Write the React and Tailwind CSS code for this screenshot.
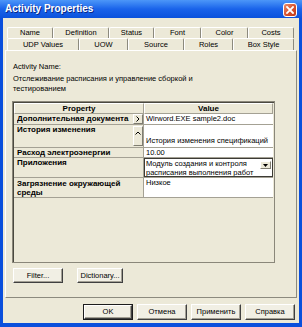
import React from "react";

const row1 = [
  ["Name", "w-[46px]"],
  ["Definition", "w-[56px]"],
  ["Status", "w-[45px]"],
  ["Font", "w-[47px]"],
  ["Color", "w-[47px]"],
  ["Costs", "w-[46px]"],
];
const row2 = [
  ["UDP Values", "w-[72px]"],
  ["UOW", "w-[49px]"],
  ["Source", "w-[56px]"],
  ["Roles", "w-[49px]"],
  ["Box Style", "w-[61px]"],
];

function Tab({ label, w, h }) {
  return (
    <div
      className={
        "flex items-center justify-center text-[7.5px] leading-none border-t border-l border-r border-t-white border-l-white border-r-[#8c8a7e] rounded-t-[2px] " +
        w +
        " " +
        h
      }
    >
      {label}
    </div>
  );
}

function Button({ label, className }) {
  return (
    <div
      className={
        "flex items-center justify-center bg-[#f1efe4] border border-t-white border-l-white border-r-[#404040] border-b-[#404040] shadow-[inset_-1px_-1px_0_#a3a094] text-[7.5px] leading-none " +
        className
      }
    >
      {label}
    </div>
  );
}

function SmallBtn({ className, children }) {
  return (
    <div
      className={
        "flex justify-center bg-[#ece9d8] border border-t-white border-l-white border-r-[#7f7d71] border-b-[#7f7d71] " +
        className
      }
    >
      {children}
    </div>
  );
}

export default function App() {
  return (
    <div className="w-[302px] h-[327px] bg-[#0a4fdc] flex flex-col font-['Liberation_Sans',Arial,sans-serif] text-black overflow-hidden">
      {/* Title bar */}
      <div className="h-[18px] flex items-center pl-[5px] pr-[5px] bg-gradient-to-b from-[#4c96f8] via-[#1a63ea] to-[#0b52dc]">
        <span className="flex-1 text-white font-bold text-[10px] leading-none [text-shadow:1px_1px_0_#0b2a86]">
          Activity Properties
        </span>
        <div className="w-[14px] h-[14px] mt-[2px] rounded-[3px] border border-white bg-gradient-to-br from-[#ea8d6c] via-[#d9542f] to-[#c03a18] flex items-center justify-center">
          <svg width="8" height="8" viewBox="0 0 8 8">
            <path d="M1 1 L7 7 M7 1 L1 7" stroke="white" strokeWidth="1.8" strokeLinecap="square" />
          </svg>
        </div>
      </div>

      {/* Body */}
      <div className="flex-1 mx-[3px] mb-[4px] bg-[#ece9d8] flex flex-col pt-[9px]">
        {/* Tabs */}
        <div className="flex ml-[4px]">
          {row1.map(([t, w]) => (
            <Tab key={t} label={t} w={w} h="h-[11px]" />
          ))}
        </div>
        <div className="flex ml-[4px]">
          {row2.map(([t, w]) => (
            <Tab key={t} label={t} w={w} h="h-[12px]" />
          ))}
        </div>

        {/* Tab page */}
        <div className="ml-[2px] w-[292px] h-[248px] border border-t-white border-l-white border-r-[#8c8a7e] border-b-[#8c8a7e] flex flex-col pl-[6px]">
          <div className="mt-[11px] pl-[1px] text-[7.5px] leading-[10px]">Activity Name:</div>
          <div className="mt-[2px] pl-[1px] text-[7.5px] leading-[10px] w-[200px]">
            Отслеживание расписания и управление сборкой и
            <br />
            тестированием
          </div>

          {/* Grid */}
          <div className="mt-[7px] w-[263px] h-[162px] border border-[#8a877a] shadow-[inset_1px_1px_0_#4a4940] pt-[1px] pl-[1px] bg-[#ece9d8]">
            <div className="grid grid-cols-[130px_129px]">
              {/* header */}
              <div className="h-[11px] flex items-center justify-center font-bold text-[8px] leading-none border-r border-b border-[#a4a194] border-t border-l border-t-white border-l-white">
                Property
              </div>
              <div className="h-[11px] flex items-center justify-center font-bold text-[8px] leading-none border-r border-b border-[#a4a194] border-t border-l border-t-white border-l-white">
                Value
              </div>

              {/* row 1 */}
              <div className="h-[11px] flex border-b border-r border-[#a4a194] pl-[3px]">
                <span className="flex-1 font-bold text-[8px] leading-[10px] whitespace-nowrap overflow-hidden">
                  Дополнительная документа
                </span>
                <SmallBtn className="w-[10px] h-[10px] items-center">
                  <svg width="4" height="6" viewBox="0 0 4 6">
                    <path d="M0.5 0.5 L3 3 L0.5 5.5" stroke="black" strokeWidth="1" fill="none" />
                  </svg>
                </SmallBtn>
              </div>
              <div className="h-[11px] bg-white border-b border-[#a4a194] pl-[2px] text-[7.5px] leading-[10px] whitespace-nowrap overflow-hidden">
                Wirword.EXE sample2.doc
              </div>

              {/* row 2 */}
              <div className="h-[23px] flex border-b border-r border-[#a4a194] pl-[3px]">
                <span className="flex-1 font-bold text-[8px] leading-[10px] whitespace-nowrap overflow-hidden">
                  История изменения
                </span>
                <SmallBtn className="w-[10px] h-[20px] mt-[1px] items-start pt-[4px]">
                  <svg width="6" height="4" viewBox="0 0 6 4">
                    <path d="M0.5 3.5 L3 1 L5.5 3.5" stroke="black" strokeWidth="1" fill="none" />
                  </svg>
                </SmallBtn>
              </div>
              <div className="h-[23px] bg-white border-b border-[#a4a194] pl-[2px] text-[7.5px] leading-[10px] flex items-end pb-[1px] whitespace-nowrap overflow-hidden">
                История изменения спецификаций
              </div>

              {/* row 3 */}
              <div className="h-[10px] border-b border-r border-[#a4a194] pl-[3px] font-bold text-[8px] leading-[9px] whitespace-nowrap overflow-hidden">
                Расход электроэнергии
              </div>
              <div className="h-[10px] bg-white border-b border-[#a4a194] pl-[2px] text-[7.5px] leading-[9px]">
                10.00
              </div>

              {/* row 4 */}
              <div className="h-[20px] border-b border-r border-[#a4a194] pl-[3px] font-bold text-[8px] leading-[10px]">
                Приложения
              </div>
              <div className="h-[20px] bg-white border-b border-[#a4a194] flex">
                <div className="flex-1 flex border border-[#3c3b35] pl-[1px]">
                  <div className="flex-1 text-[7.5px] leading-[9px] whitespace-nowrap overflow-hidden">
                    Модуль создания и контроля
                    <br />
                    расписания выполнения работ
                  </div>
                  <SmallBtn className="w-[11px] h-[8px] mt-[2px] mr-[1px] items-center">
                    <svg width="5" height="3" viewBox="0 0 5 3">
                      <path d="M0 0 L5 0 L2.5 3 Z" fill="black" />
                    </svg>
                  </SmallBtn>
                </div>
              </div>

              {/* row 5 */}
              <div className="h-[20px] border-b border-r border-[#a4a194] pl-[3px] font-bold text-[8px] leading-[9px] pt-[1px]">
                Загрязнение окружающей
                <br />
                среды
              </div>
              <div className="h-[20px] bg-white border-b border-[#a4a194] pl-[2px] text-[7.5px] leading-[10px]">
                Низкое
              </div>
            </div>
          </div>

          {/* Filter / Dictionary */}
          <div className="mt-[5px] flex gap-[14px] pl-[1px]">
            <Button label="Filter..." className="w-[50px] h-[15px]" />
            <Button label="Dictionary..." className="w-[46px] h-[15px]" />
          </div>
        </div>

        {/* Bottom buttons */}
        <div className="mt-[6px] flex justify-end gap-[4px] pr-[4px]">
          <div className="w-[50px] h-[16px] border border-[#1c1c1c] flex">
            <Button label="OK" className="flex-1" />
          </div>
          <Button label="Отмена" className="w-[50px] h-[16px]" />
          <Button label="Применить" className="w-[50px] h-[16px]" />
          <Button label="Справка" className="w-[50px] h-[16px]" />
        </div>
      </div>
    </div>
  );
}
